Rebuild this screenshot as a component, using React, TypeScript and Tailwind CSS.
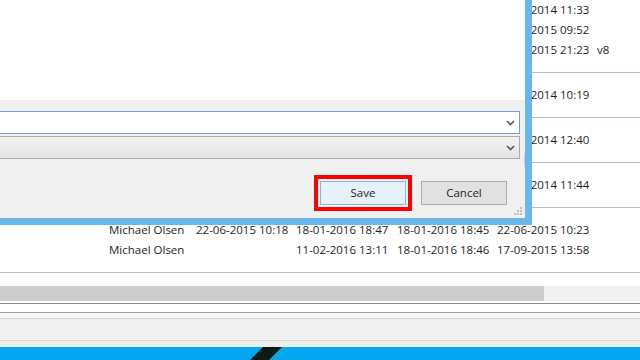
import React from 'react';

// Background list rows, grouped. Each group has padding and a line under it.
const groups: string[][][] = [
    [
        ['', '', '', '', '12-03-2014 11:33', ''],
        ['', '', '', '', '05-01-2015 09:52', ''],
        ['', '', '', '', '20-05-2015 21:23', 'v8'],
    ],
    [['', '', '', '', '14-02-2014 10:19', '']],
    [['', '', '', '', '28-04-2014 12:40', '']],
    [['', '', '', '', '03-06-2014 11:44', '']],
    [
        ['Michael Olsen', '22-06-2015 10:18', '18-01-2016 18:47', '18-01-2016 18:45', '22-06-2015 10:23', ''],
        ['Michael Olsen', '', '11-02-2016 13:11', '18-01-2016 18:46', '17-09-2015 13:58', ''],
    ],
    [['', '', '', '', '', '']],
];

const Chevron = () => (
    <svg width="9" height="6" viewBox="0 0 9 6" className="shrink-0">
        <path d="M1 1 L4.5 4.5 L8 1" fill="none" stroke="#5a5a5a" strokeWidth="1.6" />
    </svg>
);

function SaveDialog() {
    return (
        <div className="absolute left-0 top-0 w-[532px] h-[225px] border-r-[7px] border-b-[7px] border-[#69b7eb] flex flex-col z-10">
            {/* file list area */}
            <div className="h-[100px] bg-white"></div>

            {/* lower panel */}
            <div className="relative flex-1 bg-[#f0f0f0] pt-[11px] flex flex-col">
                <div className="h-[23px] mr-[5px] bg-white border border-[#6e9fd8] border-l-0 flex items-center justify-end pr-[4px]">
                    <Chevron />
                </div>
                <div className="h-[23px] mt-[2px] mr-[5px] bg-gradient-to-b from-[#f2f2f2] to-[#e4e4e4] border border-[#acacac] border-l-0 flex items-center justify-end pr-[4px]">
                    <Chevron />
                </div>

                <div className="mt-[16px] flex justify-end items-start pr-[18px]">
                    <div className="border-4 border-[#ff0000] p-[2px]">
                        <button className="w-[86px] h-[24px] bg-[#e5f1fb] border border-[#7eb4ea] text-[11.5px] text-[#1e1e1e] leading-none">
                            Save
                        </button>
                    </div>
                    <button className="ml-[9px] mt-[6px] w-[86px] h-[24px] bg-[#e1e1e1] border border-[#adadad] text-[11.5px] text-[#1e1e1e] leading-none">
                        Cancel
                    </button>
                </div>

                <div className="absolute right-0 top-[53px] w-px h-[14px] bg-[#cfcfcf]"></div>

                {/* resize grip */}
                <svg width="9" height="9" viewBox="0 0 9 9" className="absolute right-[2px] bottom-[2px]">
                    <rect x="6" y="0" width="2" height="2" fill="#bcbcbc" />
                    <rect x="3" y="3" width="2" height="2" fill="#bcbcbc" />
                    <rect x="6" y="3" width="2" height="2" fill="#bcbcbc" />
                    <rect x="0" y="6" width="2" height="2" fill="#bcbcbc" />
                    <rect x="3" y="6" width="2" height="2" fill="#bcbcbc" />
                    <rect x="6" y="6" width="2" height="2" fill="#bcbcbc" />
                </svg>
            </div>
        </div>
    );
}

export default function App() {
    return (
        <div
            className="relative w-[640px] h-[360px] overflow-hidden bg-white text-[11.5px] text-[#1e1e1e] flex flex-col"
            style={{ fontFamily: '"Segoe UI", "Open Sans", "Liberation Sans", sans-serif' }}
        >
            {/* list view */}
            <div className="h-[286px] overflow-hidden">
                <div className="-mt-[12px]">
                    {groups.map((rows, gi) => (
                        <div key={gi} className="py-[12px] border-b border-[#aebcd8]">
                            {rows.map((row, ri) => (
                                <div key={ri} className="h-[20px] pl-[109px] grid grid-cols-[87px_100px_101px_100px_100px_1fr] items-center whitespace-nowrap">
                                    {row.map((cell, ci) => (
                                        <span key={ci}>{cell}</span>
                                    ))}
                                </div>
                            ))}
                        </div>
                    ))}
                </div>
            </div>

            {/* horizontal scrollbar */}
            <div className="h-[15px] bg-[#f0f0f0] flex">
                <div className="w-[544px] bg-[#cdcdcd]"></div>
            </div>

            <div className="h-[2px] bg-white"></div>
            <div className="h-px bg-[#8c8c8c]"></div>
            <div className="h-[8px] bg-white"></div>
            <div className="h-px bg-[#a0a0a0]"></div>
            <div className="h-[5px] bg-[#f7f7f7]"></div>
            <div className="h-px bg-[#d5d5d5]"></div>
            <div className="h-[21px] bg-[#f0f0f0]"></div>
            <div className="h-px bg-[#d7d7d7]"></div>
            <div className="h-[6px] bg-[#eeeeee]"></div>

            {/* taskbar */}
            <div className="flex-1 bg-[#03a6ef] relative">
                <svg width="40" height="13" viewBox="0 0 40 13" className="absolute left-[248px] top-0">
                    <polygon points="15,0 34,0 21,13 2,13" fill="#0c1a12" />
                </svg>
            </div>

            <SaveDialog />
        </div>
    );
}
